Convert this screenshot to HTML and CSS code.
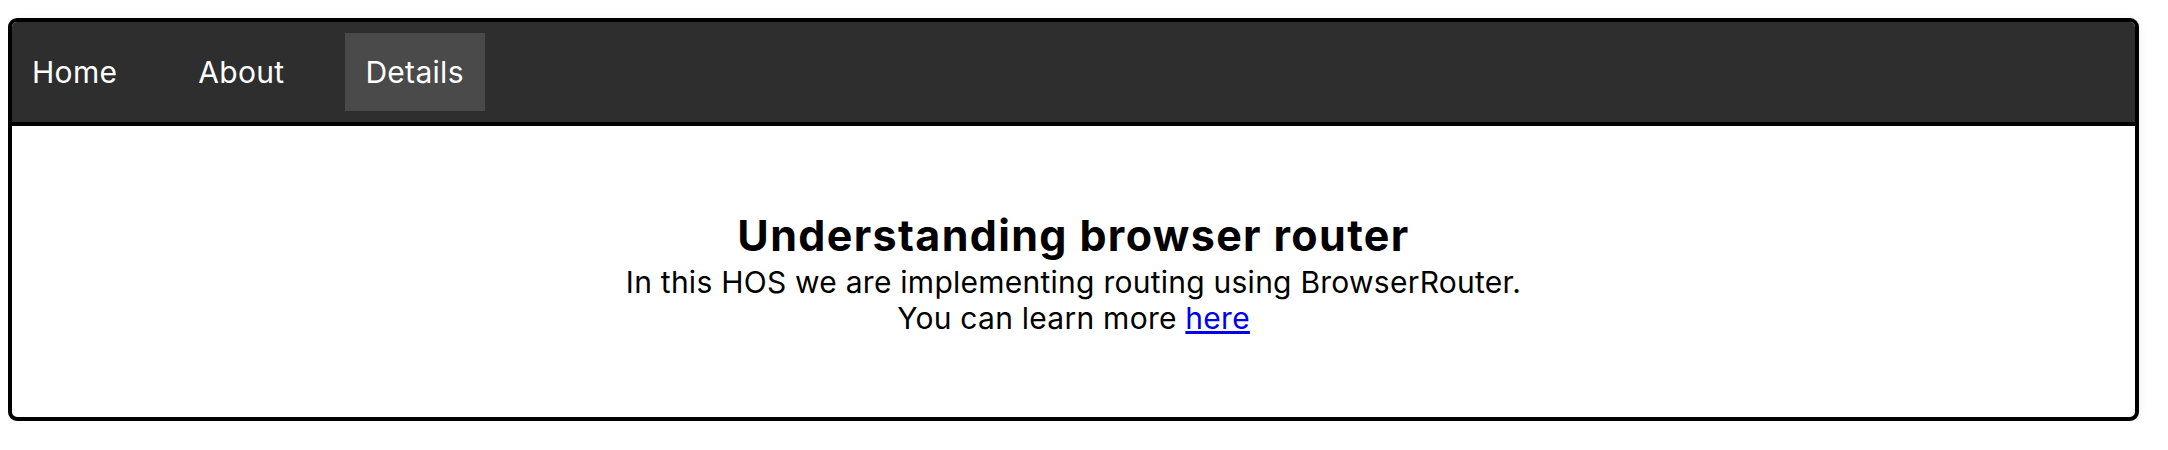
FILE: index.html
```html
<!DOCTYPE html>
<html lang="en">
<head>
<meta charset="utf-8">
<title>Understanding browser router</title>
<link rel="stylesheet" href="styles.css">
</head>
<body>
  <div class="app">
    <nav class="nav">
      <a class="nav-link" href="#">Home</a>
      <a class="nav-link" href="#">About</a>
      <a class="nav-link active" href="#">Details</a>
    </nav>
    <main class="content">
      <h1 class="title">Understanding browser router</h1>
      <p class="text">In this HOS we are implementing routing using BrowserRouter.<br>You can learn more <a class="more" href="#">here</a></p>
    </main>
  </div>
</body>
</html>
```

FILE: styles.css
```css
html, body {
  background: #ffffff;
}
body {
  margin: 8px;
  font-family: Inter, "Noto Sans", sans-serif;
}
.app {
  margin: 10px 21px 0 0;
  border: 4px solid #000;
  border-radius: 9px;
  overflow: hidden;
  box-shadow: 0 3px 10px rgba(0, 0, 0, 0.08);
}
.nav {
  display: flex;
  align-items: center;
  gap: 40px;
  height: 100px;
  background: #2e2e2e;
  border-bottom: 4px solid #000;
}
.nav-link {
  display: block;
  padding: 21px 21px 20px 20px;
  font-size: 30px;
  line-height: 37px;
  letter-spacing: 0.3px;
  color: #ffffff;
  text-decoration: none;
}
.nav-link.active {
  background: #4a4a4a;
}
.content {
  padding: 83px 0 81px;
  text-align: center;
  color: #000;
}
.title {
  margin: 0 0 3px;
  font-size: 43px;
  font-weight: 700;
  line-height: normal;
  letter-spacing: 1.35px;
}
.text {
  margin: 0;
  font-size: 30px;
  line-height: normal;
  letter-spacing: 0.25px;
}
.more {
  color: #0000ee;
  text-decoration: underline;
}
```
